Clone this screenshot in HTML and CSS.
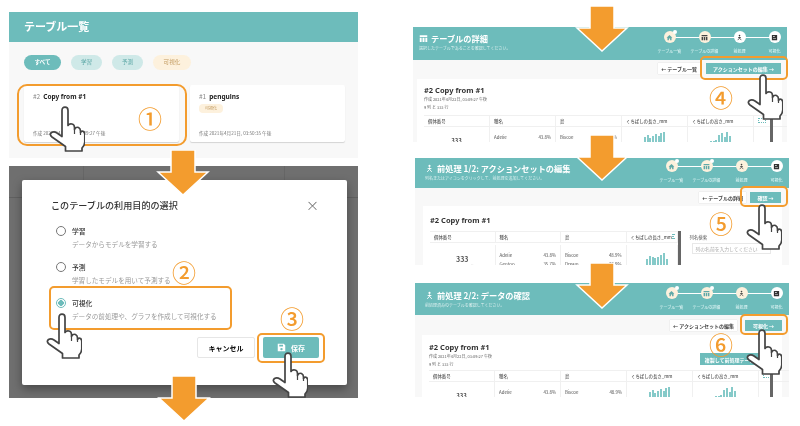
FILE: index.html
```html
<!DOCTYPE html>
<html lang="ja">
<head>
    <meta charset="UTF-8">
    <title>テーブルの利用目的の選択</title>
    <link rel="stylesheet" href="styles.css">
</head>
<body>
    <svg class="defs" xmlns="http://www.w3.org/2000/svg">
        <symbol id="i-hand" viewBox="0 0 36 46">
            <path d="M16.500 45 V40.500 L3 31 Q0 28.500 2.500 26.500 Q5 25 8 27 L13 30.500 V4.500 Q13 1.200 16 1.200 Q19 1.200 19 4.500 V19.500 Q20 17.500 23 18 Q25.500 18.500 25.500 21.500 V23.500 Q26.500 20.500 29.500 21.500 Q31.500 22.500 31.500 25 V26.500 Q32.500 24.500 34.500 25.500 Q35.800 26.500 35.800 28.500 V36 Q35.800 39 33 42 V45 Z" fill="#fff" stroke="#444" stroke-width="1.700" stroke-linejoin="round"/>
            <path d="M25.500 23.500 V28 M31.500 26.500 V29" fill="none" stroke="#444" stroke-width="1.200"/>
        </symbol>
        <symbol id="i-home" viewBox="0 0 12 12"><path d="M6 1.500 11 6.300 H9.500 V10.500 H7 V7.500 H5 V10.500 H2.500 V6.300 H1 Z"/></symbol>
        <symbol id="i-table" viewBox="0 0 12 12"><path d="M1 1.500 H11 V4 H1 Z M1 5 H3.500 V10.500 H1 Z M4.700 5 H7.300 V10.500 H4.700 Z M8.500 5 H11 V10.500 H8.500 Z"/></symbol>
        <symbol id="i-person" viewBox="0 0 12 12"><circle cx="6" cy="2.500" r="1.400"/><path d="M6 4.500 V7 L3 10.500 M6 7 L9 10.500 M3.500 6 H8.500" fill="none" stroke="currentColor" stroke-width="1.200"/></symbol>
        <symbol id="i-chart" viewBox="0 0 12 12"><path d="M1.500 1.500 H10.500 V10.500 H1.500 Z M3.500 7.500 V8.500 H8.500 V7.500 Z M3.500 4 V5 H6.500 V4 Z" fill-rule="evenodd"/></symbol>
        <symbol id="i-save" viewBox="0 0 12 12"><path d="M1 1 H9 L11 3 V11 H1 Z M3 2.200 V4.500 H8 V2.200 Z M6 6.500 A1.600 1.600 0 1 0 6 9.700 A1.600 1.600 0 1 0 6 6.500 Z" fill-rule="evenodd"/></symbol>
    </svg>

    <div class="page">
        <div class="col-left">
            <section class="list-panel">
                <h1 class="list-head">テーブル一覧</h1>
                <div class="chips">
                    <span class="chip chip-on">すべて</span>
                    <span class="chip chip-teal">学習</span>
                    <span class="chip chip-teal">予測</span>
                    <span class="chip chip-cream">可視化</span>
                </div>
                <div class="table-cards">
                    <div class="table-card">
                        <div class="tc-title"><span>#2</span><b>Copy from #1</b></div>
                        <div class="tc-date">作成 2021年4月22日, 03:09:27 午後</div>
                    </div>
                    <div class="table-card">
                        <div class="tc-title"><span>#1</span><b>penguins</b></div>
                        <span class="tc-tag">可視化</span>
                        <div class="tc-date">作成 2021年4月21日, 03:50:35 午後</div>
                    </div>
                </div>
            </section>

            <section class="modal-back">
                <div class="dialog">
                    <div class="dialog-title">
                        <span>このテーブルの利用目的の選択</span>
                        <span class="close">×</span>
                    </div>
                    <div class="option">
                        <i class="radio"></i>
                        <div><b>学習</b><p>データからモデルを学習する</p></div>
                    </div>
                    <div class="option">
                        <i class="radio"></i>
                        <div><b>予測</b><p>学習したモデルを用いて予測する</p></div>
                    </div>
                    <div class="option">
                        <i class="radio radio-on"></i>
                        <div><b>可視化</b><p>データの前処理や、グラフを作成して可視化する</p></div>
                    </div>
                    <div class="dialog-foot">
                        <button class="btn-cancel">キャンセル</button>
                        <button class="btn-save"><svg><use href="#i-save"/></svg>保存</button>
                    </div>
                </div>
            </section>
        </div>

        <div class="col-right">
            <section class="slide slide-detail">
                <header class="slide-head">
                    <div>
                        <h2><svg><use href="#i-table"/></svg>テーブルの詳細</h2>
                        <p>選択したテーブルであることを確認してください。</p>
                    </div>
                    <ol class="stepper">
                        <li class="done"><i class="dot"><svg><use href="#i-home"/></svg></i>テーブル一覧</li>
                        <li class="done dark"><i class="dot"><svg><use href="#i-table"/></svg></i>テーブルの詳細</li>
                        <li><i class="dot"><svg><use href="#i-person"/></svg></i>前処理</li>
                        <li><i class="dot"><svg><use href="#i-chart"/></svg></i>可視化</li>
                    </ol>
                </header>
                <div class="actions">
                    <button class="btn-back">← テーブル一覧</button>
                    <button class="btn-next btn-long">アクションセットの編集 →</button>
                </div>
                <div class="card">
                    <h3>#2 Copy from #1</h3>
                    <p class="meta">作成 2021年4月22日, 03:09:27 午後</p>
                    <p class="meta">9 列 と 333 行</p>
                    <div class="grid">
                        <div class="th">個体番号</div><div class="th">種名</div><div class="th">島</div><div class="th">くちばしの長さ_mm</div><div class="th">くちばしの高さ_mm</div><div class="th"><i class="expand"></i></div>
                        <div class="td td-num">333</div>
                        <div class="td"><span>Adelie</span><span>43.8%</span></div>
                        <div class="td"><span>Biscoe</span><span>48.9%</span></div>
                        <div class="td td-bars"><i style="height:5px"></i><i style="height:7px"></i><i style="height:4px"></i><i style="height:6px"></i><i style="height:8px"></i><i style="height:6px"></i><i style="height:9px"></i><i style="height:10px"></i></div>
                        <div class="td td-bars"><i style="height:1px"></i><i style="height:1px"></i><i style="height:2px"></i><i style="height:7px"></i><i style="height:9px"></i><i style="height:5px"></i><i style="height:10px"></i><i style="height:6px"></i></div>
                        <div class="td"></div>
                    </div>
                </div>
            </section>

            <section class="slide slide-edit">
                <header class="slide-head">
                    <div>
                        <h2><svg><use href="#i-person"/></svg>前処理 1/2: アクションセットの編集</h2>
                        <p>列名またはアイコンをクリックして、前処理を追加してください。</p>
                    </div>
                    <ol class="stepper">
                        <li class="done"><i class="dot"><svg><use href="#i-home"/></svg></i>テーブル一覧</li>
                        <li class="done"><i class="dot"><svg><use href="#i-table"/></svg></i>テーブルの詳細</li>
                        <li class="done dark"><i class="dot"><svg><use href="#i-person"/></svg></i>前処理</li>
                        <li><i class="dot"><svg><use href="#i-chart"/></svg></i>可視化</li>
                    </ol>
                </header>
                <div class="actions">
                    <button class="btn-back">← テーブルの詳細</button>
                    <button class="btn-next">確認 →</button>
                </div>
                <div class="card">
                    <h3>#2 Copy from #1</h3>
                    <div class="edit-body">
                        <div class="grid grid-edit">
                            <div class="th">個体番号</div><div class="th">種名</div><div class="th">島</div><div class="th">くちばしの長さ_mm<i class="expand"></i></div>
                            <div class="td td-num">333<small>ユニークな値</small></div>
                            <div class="td td-stack"><p><span>Adelie</span><span>43.8%</span></p><p><span>Gentoo</span><span>35.7%</span></p></div>
                            <div class="td td-stack"><p><span>Biscoe</span><span>48.9%</span></p><p><span>Dream</span><span>36.9%</span></p></div>
                            <div class="td td-bars"><i style="height:9px"></i><i style="height:12px"></i><i style="height:11px"></i><i style="height:10px"></i><i style="height:11px"></i><i style="height:13px"></i><i style="height:15px"></i><i style="height:9px"></i></div>
                        </div>
                        <div class="scroll-bar"></div>
                        <div class="search">
                            <label>列名検索</label>
                            <div class="search-input">列の名前を入力してください</div>
                        </div>
                    </div>
                </div>
            </section>

            <section class="slide slide-check">
                <header class="slide-head">
                    <div>
                        <h2><svg><use href="#i-person"/></svg>前処理 2/2: データの確認</h2>
                        <p>前処理済みのテーブルを確認してください。</p>
                    </div>
                    <ol class="stepper">
                        <li class="done"><i class="dot"><svg><use href="#i-home"/></svg></i>テーブル一覧</li>
                        <li class="done"><i class="dot"><svg><use href="#i-table"/></svg></i>テーブルの詳細</li>
                        <li class="done dark"><i class="dot"><svg><use href="#i-person"/></svg></i>前処理</li>
                        <li><i class="dot"><svg><use href="#i-chart"/></svg></i>可視化</li>
                    </ol>
                </header>
                <div class="actions">
                    <button class="btn-back">← アクションセットの編集</button>
                    <button class="btn-next">可視化 →</button>
                </div>
                <div class="card">
                    <div class="card-top">
                        <div>
                            <h3>#2 Copy from #1</h3>
                            <p class="meta">作成 2021年4月22日, 03:09:27 午後</p>
                            <p class="meta">9 列 と 333 行</p>
                        </div>
                        <button class="btn-copy">複製して前処理テーブル</button>
                    </div>
                    <div class="grid">
                        <div class="th">個体番号</div><div class="th">種名</div><div class="th">島</div><div class="th">くちばしの長さ_mm</div><div class="th">くちばしの高さ_mm</div><div class="th"><i class="expand"></i></div>
                        <div class="td td-num">333</div>
                        <div class="td"><span>Adelie</span><span>43.8%</span></div>
                        <div class="td"><span>Biscoe</span><span>48.9%</span></div>
                        <div class="td td-bars"><i style="height:5px"></i><i style="height:7px"></i><i style="height:4px"></i><i style="height:6px"></i><i style="height:8px"></i><i style="height:6px"></i><i style="height:9px"></i><i style="height:10px"></i></div>
                        <div class="td td-bars"><i style="height:1px"></i><i style="height:1px"></i><i style="height:2px"></i><i style="height:7px"></i><i style="height:9px"></i><i style="height:5px"></i><i style="height:10px"></i><i style="height:6px"></i></div>
                        <div class="td"></div>
                    </div>
                </div>
            </section>
        </div>

        <!-- annotations drawn over the screenshots -->
        <svg class="arrow arrow-1" viewBox="0 0 54 46"><path d="M15 0 H39 V22 H52 L27 45 L2 22 H15 Z"/></svg>
        <svg class="arrow arrow-2" viewBox="0 0 54 46"><path d="M15 0 H39 V22 H52 L27 45 L2 22 H15 Z"/></svg>
        <svg class="arrow arrow-3" viewBox="0 0 54 46"><path d="M15 0 H39 V22 H52 L27 45 L2 22 H15 Z"/></svg>
        <svg class="arrow arrow-4" viewBox="0 0 54 46"><path d="M15 0 H39 V22 H52 L27 45 L2 22 H15 Z"/></svg>
        <svg class="arrow arrow-5" viewBox="0 0 54 46"><path d="M15 0 H39 V22 H52 L27 45 L2 22 H15 Z"/></svg>

        <div class="mark mark-1"></div>
        <div class="mark mark-2"></div>
        <div class="mark mark-3"></div>
        <div class="mark mark-4"></div>
        <div class="mark mark-5"></div>
        <div class="mark mark-6"></div>

        <span class="num num-1">①</span>
        <span class="num num-2">②</span>
        <span class="num num-3">③</span>
        <span class="num num-4">④</span>
        <span class="num num-5">⑤</span>
        <span class="num num-6">⑥</span>

        <div class="stem stem-4"></div>
        <div class="stem stem-6"></div>

        <svg class="hand hand-1"><use href="#i-hand"/></svg>
        <svg class="hand hand-2"><use href="#i-hand"/></svg>
        <svg class="hand hand-3"><use href="#i-hand"/></svg>
        <svg class="hand hand-4"><use href="#i-hand"/></svg>
        <svg class="hand hand-5"><use href="#i-hand"/></svg>
        <svg class="hand hand-6"><use href="#i-hand"/></svg>
    </div>
</body>
</html>
```

FILE: styles.css
```css
* {
    box-sizing: border-box;
}
body {
    margin: 0;
    background-color: #fff;
    font-family: "Noto Sans CJK JP", "Noto Sans", sans-serif;
    color: #333;
}
h1, h2, h3, p, ol {
    margin: 0;
    padding: 0;
}
button {
    font-family: inherit;
    border: none;
    padding: 0;
}
.defs {
    display: none;
}
/* the reference is a scaled down collage, so everything is a bit soft */
.page {
    position: relative;
    display: flex;
    width: 800px;
    height: 426px;
    overflow: hidden;
    filter: blur(0.3px);
}

/* left column */
.col-left {
    flex: none;
    width: 349px;
    margin-left: 9px;
}
.list-panel {
    height: 146px;
    margin-top: 12px;
    background-color: #f8f8f8;
}
.list-head {
    height: 30px;
    padding-left: 15px;
    background-color: #6dbcbb;
    color: #fff;
    font-size: 11px;
    font-weight: 700;
    line-height: 29px;
}
.chips {
    display: flex;
    gap: 10px;
    margin: 13px 0 0 15px;
}
.chip {
    height: 15px;
    border-radius: 8px;
    font-size: 5.6px;
    line-height: 15px;
    text-align: center;
}
.chip-on {
    width: 37px;
    background-color: #6dbcbb;
    color: #fff;
    font-weight: 700;
}
.chip-teal {
    width: 31px;
    background-color: #cfe9e8;
    color: #5fa9a8;
}
.chip-cream {
    width: 38px;
    background-color: #fdf1dd;
    color: #c29a5f;
}
.table-cards {
    display: flex;
    gap: 11px;
    margin: 15px 0 0 15px;
}
.table-card {
    position: relative;
    width: 155px;
    height: 57px;
    padding: 5px 9px;
    background-color: #fff;
    box-shadow: 0 1px 1px rgba(0,0,0,0.15);
    border-radius: 2px;
}
.tc-title {
    display: flex;
    align-items: baseline;
    gap: 3px;
    font-size: 6.5px;
    line-height: 12px;
    color: #888;
}
.tc-title b {
    color: #222;
    font-family: "Noto Sans", sans-serif;
}
.tc-tag {
    display: block;
    width: 24px;
    height: 9px;
    margin-top: 1px;
    border-radius: 4px;
    background-color: #fdf1dd;
    color: #c29a5f;
    font-size: 4px;
    line-height: 9px;
    text-align: center;
}
.tc-date {
    position: absolute;
    left: 9px;
    bottom: 6px;
    font-size: 4.6px;
    color: #777;
}
.modal-back {
    height: 232px;
    margin-top: 8px;
    padding: 14px 11px 13px 13px;
    background-color: #6f6f6f;
    background-image:
        linear-gradient(#606060, #606060),
        linear-gradient(#666, #666),
        linear-gradient(#666, #666);
    background-size: 100% 1px, 1px 14px, 1px 14px;
    background-position: 0 31px, 74px 0, 275px 0;
    background-repeat: no-repeat;
}
.dialog {
    height: 205px;
    padding: 18px 28px 0 29px;
    background-color: #fff;
    border-radius: 2px;
    box-shadow: 0 4px 10px rgba(0,0,0,0.35);
}
.dialog-title {
    display: flex;
    justify-content: space-between;
    height: 14px;
    margin-bottom: 13px;
    font-size: 9.1px;
    font-weight: 500;
    line-height: 14px;
}
.close {
    font-size: 13px;
    font-weight: 300;
    color: #555;
}
.option {
    display: flex;
    gap: 6px;
    height: 36px;
    padding-left: 5px;
}
.option b {
    display: block;
    font-size: 6.8px;
    font-weight: 500;
    line-height: 12px;
}
.option p {
    margin-top: 1px;
    font-size: 6.6px;
    line-height: 12px;
    color: #999;
}
.radio {
    display: block;
    width: 10px;
    height: 10px;
    margin-top: 1px;
    border: 1px solid #777;
    border-radius: 50%;
}
.radio-on {
    border-color: #6dbcbb;
    background: radial-gradient(circle, #6dbcbb 0 2.6px, #fff 3px);
}
.dialog-foot {
    display: flex;
    justify-content: flex-end;
    gap: 8px;
    margin-top: 4px;
}
.btn-cancel {
    width: 58px;
    height: 21px;
    background-color: #fff;
    border: 1px solid #e6e6e6;
    border-radius: 2px;
    font-size: 7px;
    font-weight: 700;
}
.btn-save {
    display: flex;
    align-items: center;
    justify-content: center;
    gap: 5px;
    width: 56px;
    height: 21px;
    background-color: #6dbcbb;
    border-radius: 2px;
    color: #fff;
    font-size: 7px;
    font-weight: 700;
}
.btn-save svg {
    width: 9px;
    height: 9px;
    fill: #fff;
}

/* right column */
.col-right {
    flex: none;
    width: 376px;
    margin-left: 55px;
}
.slide {
    overflow: hidden;
    width: 374px;
    background-color: #f8f8f8;
}
.slide-detail {
    height: 115px;
    margin-top: 27px;
}
.slide-edit {
    height: 107px;
    margin: 16px 0 0 2px;
}
.slide-check {
    height: 114px;
    margin: 18px 0 0 2px;
}
.slide-head {
    display: flex;
    justify-content: space-between;
    height: 33px;
    padding: 5px 0 0 6px;
    background-color: #6dbcbb;
    color: #fff;
}
.slide-edit .slide-head {
    height: 30px;
    padding: 4px 0 0 10px;
}
.slide-check .slide-head {
    height: 32px;
    padding: 6px 0 0 10px;
}
.slide-head h2 {
    display: flex;
    align-items: center;
    gap: 3px;
    font-size: 8.2px;
    font-weight: 700;
    line-height: 13px;
    white-space: nowrap;
}
.slide-head h2 svg {
    width: 9px;
    height: 9px;
    fill: #fff;
    color: #fff;
}
.slide-head p {
    font-size: 4px;
    line-height: 6px;
    opacity: 0.75;
    white-space: nowrap;
}
.stepper {
    display: flex;
    list-style: none;
    margin: -1px -5px 0 0;
}
.slide-edit .stepper,
.slide-check .stepper {
    margin: -2px -5px 0 0;
}
.stepper li {
    position: relative;
    display: flex;
    flex-direction: column;
    align-items: center;
    gap: 5px;
    width: 35px;
    font-size: 4px;
    line-height: 6px;
    white-space: nowrap;
    color: #eafafa;
}
.stepper li::before {
    content: "";
    position: absolute;
    top: 6px;
    left: 50%;
    width: 35px;
    height: 1px;
    background-color: #fff;
}
.stepper li:last-child::before {
    display: none;
}
.dot {
    position: relative;
    display: flex;
    align-items: center;
    justify-content: center;
    width: 12px;
    height: 12px;
    border-radius: 50%;
    background-color: #fff;
    color: #333;
}
.dot svg {
    width: 7px;
    height: 7px;
    fill: #333;
}
.done .dot {
    background-color: #fdf1dd;
    color: #5fa9a8;
}
.done .dot svg {
    fill: #5fa9a8;
}
.done:not(.dark) .dot::after {
    content: "";
    position: absolute;
    top: -1px;
    right: -1px;
    width: 4px;
    height: 4px;
    border-radius: 50%;
    background-color: #fff;
}
.done.dark .dot svg {
    fill: #444;
    color: #444;
}
.actions {
    display: flex;
    justify-content: flex-end;
    gap: 6px;
    height: 19px;
    padding: 3px 6px 0 0;
}
.slide-edit .actions {
    gap: 4px;
    height: 18px;
    padding: 4px 8px 0 0;
}
.slide-check .actions {
    gap: 8px;
    height: 20px;
    padding: 5px 7px 0 0;
}
.btn-back {
    height: 11px;
    padding: 0 3px;
    background-color: #fff;
    font-size: 5px;
    font-weight: 700;
    color: #444;
    white-space: nowrap;
    box-shadow: 0 0 1px rgba(0,0,0,0.2);
}
.btn-next {
    width: 31px;
    height: 11px;
    background-color: #6dbcbb;
    color: #fff;
    font-size: 5px;
    font-weight: 700;
}
.slide-check .btn-next {
    width: 37px;
}
.btn-next.btn-long {
    width: 75px;
}
.card {
    height: 70px;
    margin: 0 5px 0 4px;
    padding: 6px 7px 0;
    background-color: #fff;
}
.slide-edit .card {
    margin: 0 7px 0 8px;
    padding-top: 9px;
}
.slide-check .card {
    margin: 0 7px;
    padding-top: 7px;
}
.card h3 {
    font-family: "Noto Sans", sans-serif;
    font-size: 7.5px;
    font-weight: 700;
    line-height: 10px;
}
.meta {
    font-size: 4px;
    line-height: 8px;
    color: #666;
}
.grid {
    display: grid;
    grid-template-columns: repeat(6, 66px);
    margin-top: 4px;
    font-size: 4.4px;
    color: #555;
}
.slide-check .grid {
    margin-top: 2px;
}
.th {
    display: flex;
    justify-content: space-between;
    height: 12px;
    padding: 0 4px;
    border: 1px solid #f0f0f0;
    border-width: 1px 1px 1px 0;
    font-weight: 500;
    line-height: 10px;
    white-space: nowrap;
    overflow: hidden;
}
.expand {
    display: block;
    width: 8px;
    height: 5px;
    margin-top: 2px;
    border: 1px dotted #6dbcbb;
}
.td {
    display: flex;
    justify-content: space-between;
    height: 16px;
    padding: 7px 4px 0;
    border-right: 1px solid #f0f0f0;
}
.td-num {
    justify-content: center;
    padding-top: 9px;
    font-size: 6px;
    font-weight: 700;
}
.td-bars {
    justify-content: center;
    align-items: flex-end;
    gap: 0.8px;
    height: 15px;
    padding: 0;
}
.td-bars i {
    display: block;
    width: 2px;
    background-color: #86cac9;
}
.card-top {
    display: flex;
    justify-content: space-between;
}
.btn-copy {
    width: 64px;
    height: 12px;
    margin: 11px 11px 0 0;
    background-color: #6dbcbb;
    color: #fff;
    font-size: 5px;
    font-weight: 700;
    white-space: nowrap;
    overflow: hidden;
}
.edit-body {
    display: flex;
}
.grid-edit {
    grid-template-columns: repeat(3, 65.500px) 51px;
    margin-top: 6px;
    height: 40px;
}
.grid-edit .td {
    height: 24px;
}
.td-stack {
    display: block;
    padding-top: 6px;
}
.td-stack p {
    display: flex;
    justify-content: space-between;
    line-height: 8.500px;
}
.grid-edit .td-num {
    display: block;
    padding-top: 10px;
    font-size: 7px;
    line-height: 9px;
    text-align: center;
}
.grid-edit .td-num small {
    display: block;
    font-size: 4px;
    font-weight: 400;
    line-height: 6px;
}
.grid-edit .td-bars {
    display: flex;
    justify-content: flex-end;
    padding: 0 9px 0 0;
    height: 23px;
}
.scroll-bar {
    width: 3px;
    height: 40px;
    margin-top: 6px;
    background-color: #666;
}
.search {
    width: 90px;
    margin-top: 6px;
    padding-left: 9px;
    font-size: 4.4px;
    color: #555;
}
.search label {
    display: block;
    height: 12px;
    line-height: 12px;
}
.search-input {
    width: 79px;
    height: 11px;
    margin-left: 2px;
    padding-left: 3px;
    border: 1px solid #e8e8e8;
    font-size: 4.8px;
    line-height: 9px;
    color: #aaa;
}

/* overlays */
.arrow {
    position: absolute;
    width: 54px;
    height: 46px;
}
.arrow path {
    fill: #f39c2e;
    stroke: #fff;
    stroke-width: 1.500;
}
.arrow-1 { left: 156px; top: 150px; }
.arrow-2 { left: 157px; top: 376px; }
.arrow-3 { left: 575px; top: 6px; }
.arrow-4 { left: 575px; top: 135px; }
.arrow-5 { left: 575px; top: 263px; }
.mark {
    position: absolute;
    border: 2px solid #f39c2e;
    border-radius: 5px;
}
.mark-1 { left: 17px; top: 84px; width: 170px; height: 62px; border-radius: 10px; }
.mark-2 { left: 49px; top: 286px; width: 183px; height: 44px; }
.mark-3 { left: 257px; top: 333px; width: 68px; height: 30px; }
.mark-4 { left: 700px; top: 56px; width: 88px; height: 24px; }
.mark-5 { left: 740px; top: 186px; width: 48px; height: 21px; }
.mark-6 { left: 740px; top: 314px; width: 48px; height: 21px; }
.num {
    position: absolute;
    width: 24px;
    color: #f39c2e;
    font-size: 24px;
    font-weight: 500;
    line-height: 24px;
    text-align: center;
}
.num-1 { left: 138px; top: 106px; }
.num-2 { left: 172px; top: 260px; }
.num-3 { left: 280px; top: 306px; }
.num-4 { left: 709px; top: 85px; }
.num-5 { left: 709px; top: 211px; }
.num-6 { left: 709px; top: 332px; }
.stem {
    position: absolute;
    left: 770px;
    width: 3px;
    background-color: #666;
}
.stem-4 { top: 115px; height: 27px; }
.stem-6 { top: 370px; height: 27px; }
.hand {
    position: absolute;
    width: 36px;
    height: 46px;
}
.hand-1 { left: 49px; top: 106px; }
.hand-2 { left: 46px; top: 313px; }
.hand-3 { left: 272px; top: 352px; }
.hand-4 { left: 747px; top: 74px; }
.hand-5 { left: 746px; top: 204px; }
.hand-6 { left: 746px; top: 329px; }
```
